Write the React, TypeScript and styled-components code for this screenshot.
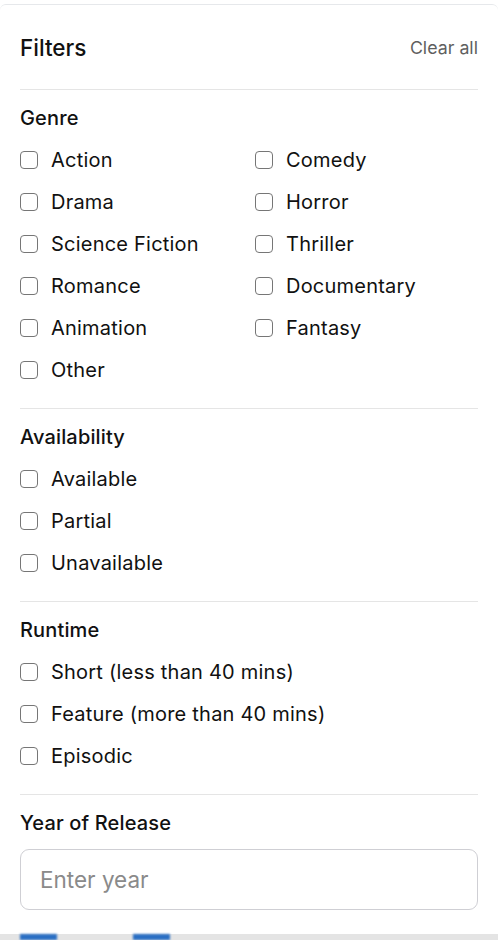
import React from "react";
import styled, { createGlobalStyle } from "styled-components";

const Global = createGlobalStyle`
  html, body { margin: 0; padding: 0; background: #ffffff; }
  body { font-family: Inter, "Noto Sans", "Liberation Sans", sans-serif; color: #111; }
  * { box-sizing: border-box; }
`;

const Page = styled.div`
  width: 498px;
  height: 940px;
  overflow: hidden;
  display: flex;
  flex-direction: column;
  padding-top: 4px;
  background: #ffffff;
`;

const Panel = styled.aside`
  width: 498px;
  height: 930px;
  flex: none;
  background: #fff;
  border-top: 1px solid #e6e8eb;
  border-radius: 6px 6px 0 0;
  padding: 0 20px 24px 20px;
  display: flex;
  flex-direction: column;
`;

const Header = styled.header`
  display: flex;
  align-items: center;
  justify-content: space-between;
  padding: 29px 0 27px;
  border-bottom: 1px solid #e5e5e5;
`;

const Title = styled.h2`
  margin: 0;
  font-size: 22.5px;
  font-weight: 500;
  line-height: 28px;
  color: #111;
`;

const ClearButton = styled.button`
  border: none;
  background: none;
  padding: 0;
  font-family: inherit;
  font-size: 17.8px;
  line-height: 28px;
  color: #5f5f5f;
  cursor: pointer;
`;

const Section = styled.section<{ $last?: boolean }>`
  padding: 16px 0 ${(p) => (p.$last ? "0" : "17px")};
  border-bottom: ${(p) => (p.$last ? "none" : "1px solid #e5e5e5")};
`;

const Heading = styled.h3`
  margin: 0 0 9px;
  font-size: 20px;
  font-weight: 500;
  line-height: 24px;
  letter-spacing: 0.15px;
  color: #111;
`;

const Grid = styled.div<{ $cols: number }>`
  display: grid;
  grid-template-columns: repeat(${(p) => p.$cols}, 1fr);
  column-gap: 12px;
`;

const Option = styled.label`
  display: flex;
  align-items: center;
  height: 42px;
  gap: 13px;
  font-size: 20px;
  letter-spacing: 0.22px;
  color: #111;
  cursor: pointer;
`;

const Box = styled.input.attrs({ type: "checkbox" })`
  appearance: none;
  -webkit-appearance: none;
  margin: 0;
  width: 18px;
  height: 18px;
  border: 1.5px solid #767676;
  border-radius: 4px;
  background: #fff;
  flex: none;
`;

const YearInput = styled.input`
  margin-top: 5px;
  width: 100%;
  height: 61px;
  border: 1px solid #cfcfd4;
  border-radius: 9px;
  padding: 0 19px;
  font-family: inherit;
  font-size: 22.5px;
  color: #111;
  outline: none;
  &::placeholder { color: #8a8a8a; }
`;

const Backdrop = styled.div`
  flex: 1;
  background: #e4e4e4;
  display: flex;
  gap: 76px;
  padding-left: 20px;
`;

const BlueChip = styled.div`
  width: 37px;
  height: 100%;
  background: #2a6fc4;
  filter: blur(0.8px);
`;

const genres = [
  "Action", "Comedy", "Drama", "Horror", "Science Fiction", "Thriller",
  "Romance", "Documentary", "Animation", "Fantasy", "Other",
];

const Check = ({ label }: { label: string }) => (
  <Option>
    <Box />
    <span>{label}</span>
  </Option>
);

export default function App() {
  return (
    <>
      <Global />
      <Page>
        <Panel>
          <Header>
            <Title>Filters</Title>
            <ClearButton>Clear all</ClearButton>
          </Header>
          <Section>
            <Heading>Genre</Heading>
            <Grid $cols={2}>
              {genres.map((g) => <Check key={g} label={g} />)}
            </Grid>
          </Section>
          <Section>
            <Heading>Availability</Heading>
            <Grid $cols={1}>
              {["Available", "Partial", "Unavailable"].map((g) => <Check key={g} label={g} />)}
            </Grid>
          </Section>
          <Section>
            <Heading>Runtime</Heading>
            <Grid $cols={1}>
              {["Short (less than 40 mins)", "Feature (more than 40 mins)", "Episodic"].map((g) => <Check key={g} label={g} />)}
            </Grid>
          </Section>
          <Section $last>
            <Heading>Year of Release</Heading>
            <YearInput placeholder="Enter year" />
          </Section>
        </Panel>
        <Backdrop>
          <BlueChip />
          <BlueChip />
        </Backdrop>
      </Page>
    </>
  );
}
